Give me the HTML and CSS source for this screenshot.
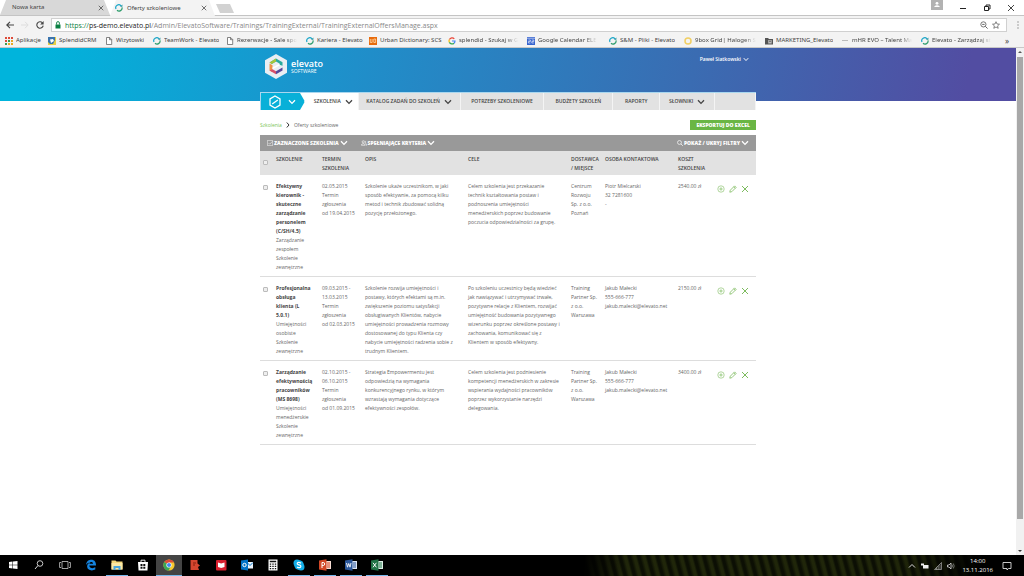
FILE: index.html
```html
<!DOCTYPE html>
<html lang="pl">
<head>
<meta charset="utf-8">
<title>Oferty szkoleniowe</title>
<link rel="stylesheet" href="styles.css">
</head>
<body>
<svg class="defs" aria-hidden="true">
  <symbol id="chev" viewBox="0 0 8 6"><path d="M1 1.2 4 4.4 7 1.2" fill="none" stroke="currentColor" stroke-width="1.3"/></symbol>
  <symbol id="ring" viewBox="0 0 8 8"><path d="M1 5A3 3 0 0 1 6 1.8" fill="none" stroke="#1ba6c9" stroke-width="1.2"/><path d="M7 3.4A3 3 0 0 1 2 6.2" fill="none" stroke="#2f9d6d" stroke-width="1.2"/><path d="M5 2.8h2.4V.5z" fill="#1b8f9c"/></symbol>
  <symbol id="page" viewBox="0 0 8 8"><path d="M1.5.5h3.2l2 2v5H1.5zM4.5.5v2.2h2.2" fill="#fff" stroke="#666" stroke-width=".8"/></symbol>
  <symbol id="x" viewBox="0 0 8 8"><path d="M1 1l6 6M7 1 1 7" fill="none" stroke="currentColor" stroke-width="1"/></symbol>
  <symbol id="plus" viewBox="0 0 8 8"><circle cx="4" cy="4" r="3.2" fill="none" stroke="currentColor" stroke-width=".6"/><path d="M4 2.3v3.4M2.3 4h3.4" stroke="currentColor" stroke-width=".7"/></symbol>
  <symbol id="pen" viewBox="0 0 8 8"><path d="M.8 7.2 1.3 5.2 5.6.9 7.1 2.4 2.8 6.7zM4.7 1.8l1.5 1.5" fill="none" stroke="currentColor" stroke-width=".8"/></symbol>
</svg>

<div class="tabs">
  <div class="tab"><span>Nowa karta</span><button aria-label="Zamknij kartę"><svg class="i6"><use href="#x"/></svg></button></div>
  <div class="tab current"><svg class="i8"><use href="#ring"/></svg><span>Oferty szkoleniowe</span><button aria-label="Zamknij kartę"><svg class="i6"><use href="#x"/></svg></button></div>
  <div class="newtab"></div>
  <div class="window-buttons">
    <svg class="profile" viewBox="0 0 12 10"><path fill="#b2b2b2" d="M0 0h12v10H0z"/><circle cx="6" cy="3.3" r="1.4" fill="#fff"/><path d="M3.4 7V6.2Q6 4.2 8.6 6.2V7z" fill="#fff"/></svg>
    <button aria-label="Minimalizuj"><svg class="i8" viewBox="0 0 8 8"><path d="M1 4.5h6" stroke="#222"/></svg></button>
    <button aria-label="Przywróć"><svg class="i8" viewBox="0 0 8 8"><path d="M1.5 2.5h4v4h-4zM3 2.5V1h4v4H5.5" fill="none" stroke="#222"/></svg></button>
    <button aria-label="Zamknij"><svg class="i8"><use href="#x"/></svg></button>
  </div>
</div>

<div class="toolbar">
  <button aria-label="Wstecz"><svg class="i8" viewBox="0 0 8 8"><path d="M8 4H1M4 .8.8 4 4 7.2" fill="none" stroke="#444" stroke-width="1.1"/></svg></button>
  <button aria-label="Dalej"><svg class="i8" viewBox="0 0 8 8"><path d="M0 4h7M4 .8 7.2 4 4 7.2" fill="none" stroke="#ddd"/></svg></button>
  <button aria-label="Odśwież"><svg class="i8" viewBox="0 0 8 8"><path d="M6.4 1.8A3.2 3.2 0 1 0 7.2 4.6" fill="none" stroke="#444" stroke-width="1.1"/><path d="M7.6 0v3.4H4.2z" fill="#444"/></svg></button>
  <div class="address">
    <svg class="lock" viewBox="0 0 6 8"><path d="M.5 3.5h5v4h-5z" fill="#0b8043"/><path d="M1.6 3.6V2a1.4 1.4 0 0 1 2.8 0v1.6" fill="none" stroke="#0b8043" stroke-width=".9"/></svg>
    <p class="url"><span class="secure">https://</span><span class="host">ps-demo.elevato.pl</span>/Admin/ElevatoSoftware/Trainings/TrainingExternal/TrainingExternalOffersManage.aspx</p>
    <svg class="i8" viewBox="0 0 8 8"><circle cx="3.4" cy="3.4" r="2.6" fill="none" stroke="#555" stroke-width=".8"/><path d="M5.3 5.3 7.6 7.6M2.2 3.4h2.4" stroke="#555" stroke-width=".9"/></svg>
    <svg class="i8" viewBox="0 0 8 8"><path d="M4 .7 5 3l2.5.2L5.6 4.9l.6 2.4L4 6 1.8 7.3l.6-2.4L.5 3.2 3 3z" fill="none" stroke="#555" stroke-width=".7"/></svg>
  </div>
  <button aria-label="Menu"><svg class="i8" viewBox="0 0 8 8"><path d="M3.5.5h1v1h-1zM3.5 3.5h1v1h-1zM3.5 6.5h1v1h-1z" fill="#555"/></svg></button>
</div>

<nav class="bookmarks" aria-label="Zakładki">
  <a href="#"><svg class="i8" viewBox="0 0 8 8"><path d="M0 0h2v2H0zM3 0h2v2H3zM6 0h2v2H6zM0 3h2v2H0z" fill="#dd4b39"/><path d="M3 3h2v2H3zM0 6h2v2H0z" fill="#3a9b50"/><path d="M6 3h2v2H6zM3 6h2v2H3zM6 6h2v2H6z" fill="#e9a825"/></svg><span>Aplikacje</span></a>
  <a href="#"><svg class="i8" viewBox="0 0 8 8"><path d="M0 0h8v8H0z" fill="#e9cf43"/><path d="M0 0h7v3L5 7H2L0 5z" fill="#3b74ad"/><path d="M2 2.5 5 2l1 2-3 2z" fill="#fff"/></svg><span>SplendidCRM</span></a>
  <a href="#"><svg class="i8"><use href="#page"/></svg><span>Wizytowki</span></a>
  <a href="#"><svg class="i8"><use href="#ring"/></svg><span>TeamWork - Elevato</span></a>
  <a href="#"><svg class="i8"><use href="#page"/></svg><span class="fade">Rezerwacje - Sale spo</span></a>
  <a href="#"><svg class="i8"><use href="#ring"/></svg><span>Kariera - Elevato</span></a>
  <a href="#"><svg class="i8" viewBox="0 0 8 8"><path d="M0 0h8v8H0z" fill="#e86b0c"/><path d="M1.3 2v3.5h1.8V2M4.8 2v3.5h1.8V2z" fill="none" stroke="#ffd9a8" stroke-width=".8"/></svg><span>Urban Dictionary: SCS</span></a>
  <a href="#"><svg class="i8" viewBox="0 0 8 8"><path d="M6.3 1.9A3 3 0 0 0 1.4 2.6" fill="none" stroke="#ea4335" stroke-width="1.2"/><path d="M1.4 2.6a3 3 0 0 0 0 2.8" fill="none" stroke="#fbbc05" stroke-width="1.2"/><path d="M1.4 5.4A3 3 0 0 0 6 6.2" fill="none" stroke="#34a853" stroke-width="1.2"/><path d="M4 4h3A3 3 0 0 1 6 6.2" fill="none" stroke="#4285f4" stroke-width="1.2"/></svg><span class="fade">splendid - Szukaj w G</span></a>
  <a href="#"><svg class="i8" viewBox="0 0 8 8"><path d="M0 0h8v8H0z" fill="#3764cf"/><path d="M1.4 3h2v1.5h-2V6h2M4.8 3h2v1.5h-2V6h2M0 1.2h8" fill="none" stroke="#fff" stroke-width=".6"/></svg><span class="fade">Google Calendar ELE</span></a>
  <a href="#"><svg class="i8"><use href="#ring"/></svg><span>S&amp;M - Pliki - Elevato</span></a>
  <a href="#"><svg class="i8" viewBox="0 0 8 8"><circle cx="4" cy="4" r="3" fill="none" stroke="#f1cf63" stroke-width="1.5"/></svg><span class="fade">9box Grid| Halogen S</span></a>
  <a href="#"><svg class="i8" viewBox="0 0 8 8"><path d="M0 1h3l1 1h4v5.5H0z" fill="#555"/><path d="M3.2 3h3.5v3.5H3.2z" fill="#bbb"/><circle cx="5" cy="4.3" r=".8" fill="#555"/></svg><span>MARKETING_Elevato</span></a>
  <a href="#"><svg class="i8" viewBox="0 0 8 8"><path d="M1 3.5h6" stroke="#bbb"/></svg><span class="fade">mHR EVO – Talent Ma</span></a>
  <a href="#"><svg class="i8"><use href="#ring"/></svg><span class="fade">Elevato - Zarządzaj st</span></a>
  <a href="#" class="more">»</a>
</nav>

<div class="viewport">
  <div class="site">
    <header class="hero">
      <div class="wrap hero-row">
        <a class="brand" href="#">
          <svg class="logo" viewBox="0 0 22 25"><path d="M11 0 22 6.2v12.6L11 25 0 18.800V6.200z" fill="#e9eef3"/><path d="M4.500 8.500 11 4.500l6.500 3.800v3.500l-3-1V9.500L11 7.500 6.800 10z" fill="#2baa9d"/><path d="M4.500 8.500 11 4.500v3L6.800 10z" fill="#a5c63b"/><path d="M4.500 9.500v7l3 1.700v-7z" fill="#ef9245"/><path d="M4.500 16.500 11 20.300v-3l-3.500-2z" fill="#d84f6b"/><path d="M11 20.300l6.500-3.800v-3L11 17.300z" fill="#58469b"/><path d="M7.500 13.500 14.500 9.800v1.800L7.500 15.300z" fill="#fff"/></svg>
          <span class="brand-text"><b>elevato</b><small>SOFTWARE</small></span>
        </a>
        <button class="user">Paweł Siatkowski <svg class="chev-s"><use href="#chev"/></svg></button>
      </div>
    </header>

    <main class="wrap main">
      <nav class="menu" aria-label="Menu główne">
        <button class="home" aria-label="Moduły"><svg class="hex" viewBox="0 0 12 14"><path d="M6 1l5 2.900v6.200L6 13l-5-2.900V3.900z" fill="none" stroke="#fff" stroke-width="1.300"/><path d="M3.200 9 8.800 5" stroke="#fff" stroke-width="1.300"/></svg><svg class="chev"><use href="#chev"/></svg></button>
        <button class="active">SZKOLENIA <svg class="chev"><use href="#chev"/></svg></button>
        <button>KATALOG ZADAŃ DO SZKOLEŃ <svg class="chev"><use href="#chev"/></svg></button>
        <button>POTRZEBY SZKOLENIOWE</button>
        <button>BUDŻETY SZKOLEŃ</button>
        <button>RAPORTY</button>
        <button>SŁOWNIKI <svg class="chev"><use href="#chev"/></svg></button>
        <span></span>
      </nav>

      <div class="crumb-row">
        <p class="crumbs"><a href="#">Szkolenia</a><svg class="sep" viewBox="0 0 4 6"><path d="M.8.5 3 3 .8 5.5" fill="none" stroke="#333"/></svg>Oferty szkoleniowe</p>
        <button class="export">EKSPORTUJ DO EXCEL</button>
      </div>

      <div class="actions">
        <button><svg class="i6" viewBox="0 0 8 8"><path d="M.5.5h7v7h-7zM2 4l1.6 1.6L7 2" fill="none" stroke="#fff" stroke-width=".7"/></svg>ZAZNACZONE SZKOLENIA <svg class="chev"><use href="#chev"/></svg></button>
        <button><svg class="i6" viewBox="0 0 8 8"><circle cx="3" cy="2.5" r="1.5" fill="none" stroke="#fff" stroke-width=".8"/><path d="M.5 7V6Q3 3.5 5.5 6V7zM5 1.2q2 .5 1 2.6L7.6 7H6.5" fill="none" stroke="#fff" stroke-width=".8"/></svg>SPEŁNIAJĄCE KRYTERIA <svg class="chev"><use href="#chev"/></svg></button>
        <button class="filters"><svg class="i6" viewBox="0 0 8 8"><circle cx="3.3" cy="3.3" r="2.6" fill="none" stroke="#fff" stroke-width=".9"/><path d="M5.3 5.3 7.8 7.8" stroke="#fff"/></svg>POKAŻ / UKRYJ FILTRY <svg class="chev"><use href="#chev"/></svg></button>
      </div>

      <table class="offers">
        <colgroup><col class="c-check"><col class="c-name"><col class="c-date"><col class="c-text"><col class="c-text"><col class="c-vendor"><col class="c-person"><col class="c-cost"><col class="c-tools"></colgroup>
        <thead><tr>
          <th><input type="checkbox" aria-label="Zaznacz wszystkie"></th><th>SZKOLENIE</th><th>TERMIN<br>SZKOLENIA</th><th>OPIS</th><th>CELE</th><th>DOSTAWCA<br>/ MIEJSCE</th><th>OSOBA KONTAKTOWA</th><th>KOSZT<br>SZKOLENIA</th><th></th>
        </tr></thead>
        <tbody>
          <tr>
            <td><input type="checkbox" aria-label="Efektywny kierownik"></td>
            <td><b>Efektywny<br>kierownik -<br>skuteczne<br>zarządzanie<br>personelem<br>(C/SH/4.5)</b><br>Zarządzanie<br>zespołem<br>Szkolenie<br>zewnętrzne</td>
            <td>02.05.2015<br>Termin<br>zgłoszenia<br>od 19.04.2015</td>
            <td>Szkolenie ukaże uczestnikom, w jaki<br>sposób efektywnie, za pomocą kilku<br>metod i technik zbudować solidną<br>pozycję przełożonego.</td>
            <td>Celem szkolenia jest przekazanie<br>technik kształtowania postaw i<br>podnoszenia umiejętności<br>menedżerskich poprzez budowanie<br>poczucia odpowiedzialności za grupę.</td>
            <td>Centrum<br>Rozwoju<br>Sp. z o.o.<br>Poznań</td>
            <td>Piotr Mielcarski<br>32 7281600<br>-</td>
            <td>2540.00 zł</td>
            <td><div class="tools"><button aria-label="Dodaj"><svg class="i8"><use href="#plus"/></svg></button><button aria-label="Edytuj"><svg class="i8"><use href="#pen"/></svg></button><button aria-label="Usuń"><svg class="i8"><use href="#x"/></svg></button></div></td>
          </tr>
          <tr>
            <td><input type="checkbox" aria-label="Profesjonalna obsługa klienta"></td>
            <td><b>Profesjonalna<br>obsługa<br>klienta (L<br>5.0.1)</b><br>Umiejętności<br>osobiste<br>Szkolenie<br>zewnętrzne</td>
            <td>09.03.2015 -<br>13.03.2015<br>Termin<br>zgłoszenia<br>od 02.03.2015</td>
            <td>Szkolenie rozwija umiejętności i<br>postawy, których efektami są m.in.<br>zwiększenie poziomu satysfakcji<br>obsługiwanych Klientów, nabycie<br>umiejętności prowadzenia rozmowy<br>dostosowanej do typu Klienta czy<br>nabycie umiejętności radzenia sobie z<br>trudnym Klientem.</td>
            <td>Po szkoleniu uczestnicy będą wiedzieć<br>jak nawiązywać i utrzymywać trwałe,<br>pozytywne relacje z Klientem, rozwijać<br>umiejętność budowania pozytywnego<br>wizerunku poprzez określone postawy i<br>zachowania, komunikować się z<br>Klientem w sposób efektywny.</td>
            <td>Training<br>Partner Sp.<br>z o.o.<br>Warszawa</td>
            <td>Jakub Małecki<br>555-666-777<br>jakub.malecki@elevato.net</td>
            <td>2150.00 zł</td>
            <td><div class="tools"><button aria-label="Dodaj"><svg class="i8"><use href="#plus"/></svg></button><button aria-label="Edytuj"><svg class="i8"><use href="#pen"/></svg></button><button aria-label="Usuń"><svg class="i8"><use href="#x"/></svg></button></div></td>
          </tr>
          <tr>
            <td><input type="checkbox" aria-label="Zarządzanie efektywnością pracowników"></td>
            <td><b>Zarządzanie<br>efektywnością<br>pracowników<br>(MS 8698)</b><br>Umiejętności<br>menedżerskie<br>Szkolenie<br>zewnętrzne</td>
            <td>02.10.2015 -<br>06.10.2015<br>Termin<br>zgłoszenia<br>od 01.09.2015</td>
            <td>Strategia Empowermentu jest<br>odpowiedzią na wymagania<br>konkurencyjnego rynku, w którym<br>wzrastają wymagania dotyczące<br>efektywności zespołów.</td>
            <td>Celem szkolenia jest podniesienie<br>kompetencji menedżerskich w zakresie<br>wspierania wydajności pracowników<br>poprzez wykorzystanie narzędzi<br>delegowania.</td>
            <td>Training<br>Partner Sp.<br>z o.o.<br>Warszawa</td>
            <td>Jakub Małecki<br>555-666-777<br>jakub.malecki@elevato.net</td>
            <td>3400.00 zł</td>
            <td><div class="tools"><button aria-label="Dodaj"><svg class="i8"><use href="#plus"/></svg></button><button aria-label="Edytuj"><svg class="i8"><use href="#pen"/></svg></button><button aria-label="Usuń"><svg class="i8"><use href="#x"/></svg></button></div></td>
          </tr>
        </tbody>
      </table>
    </main>
  </div>
  <div class="scrollbar">
    <svg class="arrow" viewBox="0 0 8 8"><path d="M2 5h4L4 3z" fill="#555"/></svg>
    <div class="thumb"></div>
    <svg class="arrow" viewBox="0 0 8 8"><path d="M2 3h4L4 5z" fill="#333"/></svg>
  </div>
</div>

<footer class="taskbar">
  <button aria-label="Start"><svg viewBox="0 0 12 12"><path d="M2 3l3.5-.5v3.2H2zM6 2.4 10.500 2v3.700H6zM2 6.200h3.500v3.300L2 9zM6 6.200h4.500V10L6 9.600z" fill="#fff"/></svg></button>
  <button aria-label="Szukaj"><svg viewBox="0 0 12 12"><circle cx="7" cy="4.500" r="2.800" fill="none" stroke="#ddd" stroke-width=".9"/><path d="M5 6.500 2 10" stroke="#ddd"/></svg></button>
  <button aria-label="Widok zadań"><svg viewBox="0 0 12 12"><path d="M3 2.500h6v7H3zM2 3.500H.6v5H2M10 3.500h1.400v5H10" fill="none" stroke="#ccc" stroke-width=".8"/></svg></button>
  <button aria-label="Edge"><svg viewBox="0 0 12 12"><path d="M1 6C1.500 2 4 .8 6.400.8c3 0 4.700 2.200 4.600 5.700H4.300c.2 2.800 3.500 3.300 6 1.800v2.300C6 12.500 1.500 10.800 2.200 6.700 2.500 5 3.700 4 5 3.500 3 3.600 1.800 4.700 1 6zm3.400-1.300h3.700C8 2.500 4.800 2.500 4.400 4.700z" fill="#1584e0"/></svg></button>
  <button class="open" aria-label="Eksplorator"><svg viewBox="0 0 12 12"><path d="M.5 1.500h4l1 1h6v8H.5z" fill="#f4d77a"/><path d="M.5 4h11v6.500H.5z" fill="#fbe9a6"/><path d="M2.500 7h7v4h-2V9h-3v2h-2z" fill="#4aa6dc"/></svg></button>
  <button aria-label="Sklep"><svg viewBox="0 0 12 12"><path d="M1 3h10l-.5 8.500h-9z" fill="#fff"/><path d="M4 3.500V1.200h4v2.300" fill="none" stroke="#fff" stroke-width=".9"/><path d="M3.500 5h2v2h-2zM6.300 5h2v2h-2zM3.500 7.800h2v2h-2zM6.300 7.800h2v2h-2z" fill="#111"/></svg></button>
  <button class="open focused" aria-label="Chrome"><svg viewBox="0 0 12 12"><circle cx="6" cy="6" r="5.600" fill="#f7c92e"/><path d="M6 6 1.200 3.100A5.600 5.600 0 0 1 11 3.500H6z" fill="#dd4b39"/><path d="M6 6 1.200 3.100A5.600 5.600 0 0 0 5.500 11.600L8.200 7z" fill="#3aa757"/><circle cx="6" cy="6" r="2.600" fill="#fff"/><circle cx="6" cy="6" r="2" fill="#4285f4"/></svg></button>
  <button aria-label="Aplikacja"><svg viewBox="0 0 12 12"><path d="M1.500 1h7v3.500l2.500 2-2 1.500 1 3H1.500z" fill="#d4452f"/><path d="M4 4h3M4 6h2" stroke="#85200f"/></svg></button>
  <button aria-label="Czytnik"><svg viewBox="0 0 12 12"><rect x="1" y="1" width="10.500" height="10.500" rx="1" fill="#d8202f"/><path d="M3 3.500 6.200 4.500 9.500 3.500v4.500L6.200 9 3 8z" fill="#fff"/></svg></button>
  <button aria-label="Outlook"><svg viewBox="0 0 12 12"><path d="M6 3h6v6.500H6z" fill="#eaf3fb"/><path d="M6 3.500 9 6.500 12 3.500" fill="none" stroke="#0072c6"/><path d="M0 1.500 7 .5v11L0 10.500z" fill="#0072c6"/><circle cx="3.500" cy="6" r="1.700" fill="none" stroke="#fff"/></svg></button>
  <button aria-label="Kalkulator"><svg viewBox="0 0 12 12"><path d="M1.500.5h9v11h-9z" fill="#fff"/><path d="M2.800 1.800h6.400v1.500H2.800zM2.800 4.500h1.400v1.200H2.800zM5.300 4.500h1.400v1.200H5.300zM7.800 4.500h1.400v1.200H7.800zM2.800 6.800h1.400V8H2.800zM5.300 6.800h1.400V8H5.300zM7.800 6.800h1.400V8H7.800zM2.800 9.100h1.400v1.200H2.800zM5.300 9.100h1.400v1.200H5.300zM7.800 9.100h1.400v1.200H7.800z" fill="#111"/></svg></button>
  <button class="open" aria-label="Skype"><svg viewBox="0 0 12 12"><circle cx="4" cy="4" r="3.500" fill="#13aee8"/><circle cx="8" cy="8" r="3.500" fill="#13aee8"/><circle cx="6" cy="6" r="4.800" fill="#13aee8"/><path d="M8 4.300Q6 2.700 4.500 3.800 3.500 5.300 6 5.900 8.700 6.600 7.500 8.200 6 9.300 4 7.900" fill="none" stroke="#fff" stroke-width="1.200"/></svg></button>
  <button class="open" aria-label="PowerPoint"><svg viewBox="0 0 12 12"><path d="M6 2h6v8H6z" fill="#f7ddd3"/><path d="M8 4h3M8 6h3M8 8h3" stroke="#d24726"/><path d="M0 1.500 7.500.3v11.400L0 10.500z" fill="#d24726"/><path d="M3 9V3.500h1.200a1.500 1.500 0 0 1 0 3H3" fill="none" stroke="#fff"/></svg></button>
  <button class="open" aria-label="Word"><svg viewBox="0 0 12 12"><path d="M6 2h6v8H6z" fill="#dce6f5"/><path d="M8 4h3M8 6h3M8 8h3" stroke="#2b579a"/><path d="M0 1.500 7.500.3v11.400L0 10.500z" fill="#2b579a"/><path d="M1.500 4l1 4.200L3.700 4.500 5 8.200 6 4" fill="none" stroke="#fff" stroke-width=".9"/></svg></button>
  <button class="open" aria-label="Excel"><svg viewBox="0 0 12 12"><path d="M6 2h6v8H6z" fill="#dcefe4"/><path d="M8 4h3M8 6h3M8 8h3" stroke="#217346"/><path d="M0 1.500 7.500.3v11.400L0 10.500z" fill="#217346"/><path d="M2 3.800l3.400 4.500M5.400 3.800 2 8.300" stroke="#fff"/></svg></button>
  <div class="tray">
    <svg class="i8" viewBox="0 0 8 8"><path d="M1 5.500 4 2.500 7 5.500" fill="none" stroke="#ddd"/></svg>
    <svg class="i8" viewBox="0 0 8 8"><path d="M2 3h5.500v3.500H2zM0 1.500h3v2H0z" fill="#eee"/></svg>
    <svg class="i8" viewBox="0 0 8 8"><path d="M.5 7.500 7.500.5v7zM2.500 7.500v-2M4.200 7.500v-3.500M6 7.500V2.500" fill="none" stroke="#aaa" stroke-width=".7"/></svg>
    <svg class="i8" viewBox="0 0 8 8"><path d="M.5 3H2l2-2v6L2 5H.5z" fill="none" stroke="#ddd" stroke-width=".8"/><path d="M5 2.500q1 1.500 0 3M6.300 1.500q1.800 2.500 0 5" fill="none" stroke="#999" stroke-width=".7"/></svg>
    <div class="clock"><span>14:00</span><span>13.11.2016</span></div>
    <svg class="note" viewBox="0 0 10 10"><path d="M1 1.500h8v6H6.500L5 9V7.500H1z" fill="none" stroke="#ddd" stroke-width=".9"/></svg>
  </div>
</footer>
</body>
</html>
```

FILE: styles.css
```css
* { box-sizing: border-box; }
body {
  margin: 0;
  min-height: 100vh;
  display: flex;
  flex-direction: column;
  background: #fff;
  color: #666;
  font-family: "Open Sans", "Noto Sans", sans-serif;
  font-size: 5px;
  line-height: 9px;
}
button {
  margin: 0;
  padding: 0;
  border: 0;
  background: none;
  color: inherit;
  font: inherit;
  white-space: nowrap;
  display: flex;
  align-items: center;
}
a { color: inherit; text-decoration: none; }
p { margin: 0; }
svg { flex: none; display: block; }
.defs { position: absolute; width: 0; height: 0; }
.i6 { width: 6px; height: 6px; }
.i8 { width: 8px; height: 8px; }

/* Browser window */
.tabs, .toolbar, .bookmarks {
  font-family: "Noto Sans", "Open Sans", sans-serif;
  color: #444;
}
.tabs {
  display: flex;
  height: 16px;
  border-bottom: 1px solid #c4c4c4;
  font-size: 6px;
}
.tab {
  display: flex;
  align-items: center;
  width: 110px;
  padding: 0 6px 0 12px;
  background: #d8d8d8;
  clip-path: polygon(6px 0, 104px 0, 100% 100%, 0 100%);
}
.tab button { margin-left: auto; }
.tab.current {
  width: 105px;
  margin-bottom: -1px;
  padding: 0 8px 0 5px;
  gap: 4px;
  background: #f3f3f3;
  clip-path: polygon(6px 0, 99px 0, 100% 100%, 0 100%);
}
.newtab {
  width: 18px;
  height: 9px;
  margin: 4px 0 0 1px;
  background: #d2d2d2;
  clip-path: polygon(0 0, 14px 0, 100% 100%, 4px 100%);
}
.window-buttons {
  display: flex;
  align-items: center;
  gap: 16px;
  margin-left: auto;
  padding-right: 9px;
}
.profile { width: 12px; height: 10px; align-self: flex-start; }
.toolbar {
  display: flex;
  align-items: center;
  gap: 7px;
  height: 18px;
  padding: 0 2px 0 6px;
  background: #f3f3f3;
}
.address {
  flex: 1;
  display: flex;
  align-items: center;
  gap: 4px;
  height: 14px;
  padding: 0 6px 0 3px;
  border: 1px solid #d0d0d0;
  background: #fff;
}
.lock { width: 6px; height: 8px; }
.url {
  flex: 1;
  color: #888;
  font-size: 7px;
  font-family: "Open Sans", "Noto Sans", sans-serif;
}
.secure { color: #0b8043; }
.host { color: #222; }
.bookmarks {
  display: grid;
  grid-template-columns: 43fr 57fr 48fr 73fr 80fr 63fr 79fr 79fr 82fr 75fr 81fr 76fr 80fr 84fr 19fr;
  height: 14px;
  padding-left: 5px;
  background: #f3f3f3;
  border-bottom: 1px solid #c8c8c8;
  font-size: 6px;
}
.bookmarks a {
  display: flex;
  align-items: center;
  gap: 3px;
  min-width: 0;
  padding-right: 4px;
  white-space: nowrap;
}
.bookmarks span { overflow: hidden; }
.bookmarks .fade { mask-image: linear-gradient(90deg, #000 80%, transparent); }
.more { font-size: 8px; }

.viewport { flex: 1; display: flex; }
.site { flex: 1; }
.scrollbar {
  display: flex;
  flex-direction: column;
  width: 8px;
  background: #f1f1f1;
}
.arrow { width: 8px; height: 8px; }
.thumb { flex: 0 1 462px; margin: 1px 1px auto; background: #a8a8a8; }

/* Site header */
.wrap { width: 48%; min-width: 496px; margin: 0 auto; }
.hero { background: linear-gradient(100deg, #00b4dc 3%, #1f8fca 35%, #3a6cb2 68%, #524da2 95%); }
.hero-row {
  display: flex;
  justify-content: space-between;
  align-items: flex-start;
  padding: 6px 7px 22px 5px;
}
.brand { display: flex; align-items: center; gap: 4px; color: #fff; }
.logo { width: 22px; height: 25px; }
.brand-text { display: flex; flex-direction: column; }
.brand-text b { font-size: 9px; line-height: 8px; font-weight: 600; }
.brand-text small { font-size: 5px; line-height: 6px; }
.user { gap: 2px; color: #fff; font-weight: 600; margin-top: 1px; }
.chev { width: 8px; height: 6px; }
.chev-s { width: 6px; height: 5px; }

.main { margin-top: -9px; padding-bottom: 20px; }
.menu {
  display: grid;
  grid-template-columns: 44fr 54fr 102fr 84fr 69fr 47fr 55fr 41fr;
  height: 18px;
  border: 1px solid #a9d7ef;
  border-width: 1px 0 0 1px;
  background: #fff;
  color: #444;
  font-weight: 600;
}
.menu > * {
  min-width: 0;
  justify-content: center;
  gap: 4px;
  background: #e2e2e2;
  border-right: 1px solid #f4f4f4;
}
.menu .active { background: #fff; padding-left: 4px; }
.menu .home {
  gap: 7px;
  background: #08b0d8;
  color: #fff;
  clip-path: polygon(0 0, 39px 0, 100% 50%, 39px 100%, 0 100%);
}
.hex { width: 12px; height: 14px; }

.crumb-row {
  display: flex;
  justify-content: space-between;
  align-items: center;
  padding: 10px 0 5px;
}
.crumbs { display: flex; align-items: center; gap: 4px; }
.crumbs a { color: #7cc558; }
.sep { width: 4px; height: 6px; }
.export {
  height: 10px;
  padding: 0 6px;
  background: #6ab644;
  color: #fff;
  font-weight: 800;
}
.actions {
  display: flex;
  align-items: center;
  gap: 13px;
  height: 16px;
  padding: 0 7px;
  background: #999;
  color: #fff;
  font-weight: 800;
}
.actions button { gap: 1px; }
.actions .filters { margin-left: auto; }

/* Offers table */
.offers {
  width: 100%;
  table-layout: fixed;
  border-collapse: collapse;
  white-space: nowrap;
}
.c-check { width: 16px; }
.c-name { width: 46px; }
.c-date { width: 43px; }
.c-text { width: 103px; }
.c-vendor { width: 34px; }
.c-person { width: 73px; }
.c-cost { width: 38px; }
.c-tools { width: 40px; }
.offers th, .offers td {
  padding: 7px 0 4px;
  text-align: left;
  vertical-align: top;
}
.offers th {
  padding: 4px 0 2px;
  background: #e2e2e2;
  color: #444;
  font-weight: 600;
}
.offers td { border-bottom: 1px solid #ddd; }
.offers b { color: #444; }
.offers input {
  appearance: none;
  display: block;
  width: 5px;
  height: 5px;
  margin: 3px;
  border: 1px solid #bbb;
  border-radius: 1px;
  background: #eee;
}
.offers th input { margin-top: 5px; }
.tools { display: flex; gap: 4px; padding: 3px 0 0 1px; color: #7dbb5e; }

/* Taskbar */
.taskbar {
  display: flex;
  height: 21px;
  color: #fff;
  background:
    linear-gradient(90deg, #000 57%, transparent 61%, transparent 88%, #000 96%),
    repeating-linear-gradient(75deg, #0c0f04 0 2px, #20260a 5px 7px, #0c0f04 9px);
}
.taskbar button {
  width: 26px;
  justify-content: center;
  border-bottom: 1px solid transparent;
}
.taskbar .open { border-bottom-color: #76b9ed; }
.taskbar .focused { background: #444; }
.taskbar button svg { width: 12px; height: 12px; }
.taskbar .open { width: 22px; margin: 0 2px; }
.taskbar .focused { width: 26px; margin: 0; }
.tray {
  display: flex;
  align-items: center;
  gap: 5px;
  margin-left: auto;
  padding-right: 12px;
}
.clock {
  display: flex;
  flex-direction: column;
  align-items: center;
  padding: 0 4px 0 2px;
  font-size: 6px;
}
.note { width: 10px; height: 10px; }
```
